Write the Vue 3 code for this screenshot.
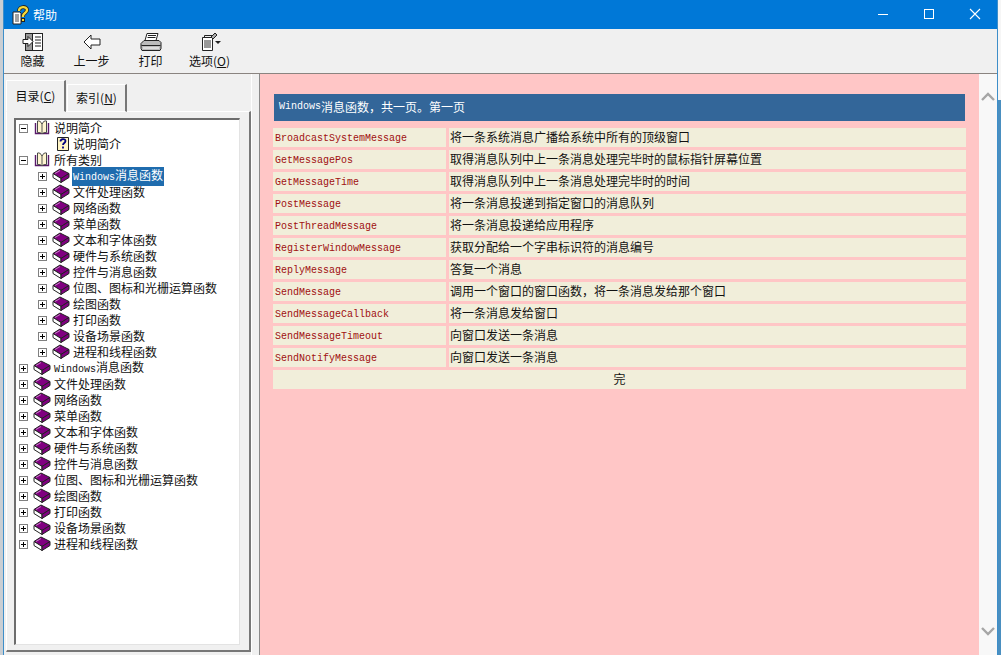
<template>
  <div class="desktop">
    <div class="window">
      <div class="titlebar">
        <svg class="app-icon" width="18" height="20" viewBox="0 0 18 20">
          <path d="M1 7h7l1 1v11H1z" fill="#fff" stroke="#222" />
          <path d="M3 10h4M3 12h4M3 14h4M3 16h4" stroke="#444" />
          <path d="M7 6c0-5 8-5 8-1 0 3-4 3-4 6v1" fill="none" stroke="#222" stroke-width="4" />
          <path d="M7 6c0-5 8-5 8-1 0 3-4 3-4 6v1" fill="none" stroke="#f4d93a" stroke-width="2.400" />
          <rect x="9.500" y="13.500" width="3" height="3" fill="#f4d93a" stroke="#222" />
        </svg>
        <span class="title">帮助</span>
        <div class="caption">
          <svg width="46" height="28" viewBox="0 0 46 28"><path d="M19 13.500h10" stroke="#fff" /></svg>
          <svg width="46" height="28" viewBox="0 0 46 28"><rect x="19.500" y="8.500" width="9" height="9" fill="none" stroke="#fff" /></svg>
          <svg width="46" height="28" viewBox="0 0 46 28"><path d="M19 8l10 10M29 8L19 18" stroke="#fff" stroke-width="1.100" /></svg>
        </div>
      </div>

      <div class="toolbar">
        <div class="tool">
          <svg width="22" height="20" viewBox="0 0 22 20">
            <rect x="3.500" y="1.500" width="17" height="17" fill="#fff" stroke="#222" />
            <rect x="3.500" y="1.500" width="7" height="17" fill="#9a9a9a" stroke="#222" />
            <path d="M13 5h6M13 8h6M13 11h6M13 14h6" stroke="#222" />
            <path d="M1 7.500h5v-3l5 5-5 5v-3H1z" fill="#fff" stroke="#222" />
          </svg>
          <span>隐藏</span>
        </div>
        <div class="tool">
          <svg width="22" height="20" viewBox="0 0 22 20">
            <path d="M3 10l7-7v4h9v6h-9v4z" fill="#fff" stroke="#222" />
          </svg>
          <span>上一步</span>
        </div>
        <div class="tool">
          <svg width="22" height="20" viewBox="0 0 22 20">
            <path d="M7 1.500h11l-2 7H5z" fill="#fff" stroke="#222" />
            <path d="M8 3.500h8M7.500 5.500h8" stroke="#222" />
            <path d="M4 8.500h15l2 2v6l-1 2H2l-1-2v-5z" fill="#bbb" stroke="#222" />
            <path d="M1.500 13.500h19" stroke="#222" />
            <path d="M3 16h16" stroke="#fff" />
          </svg>
          <span>打印</span>
        </div>
        <div class="tool">
          <svg width="22" height="20" viewBox="0 0 22 20">
            <path d="M3.500 5.500h10v13h-10z" fill="#fff" stroke="#222" />
            <path d="M5.500 3.500h10v2M5.500 3.500v2" fill="none" stroke="#222" />
            <path d="M5 9h7M5 11h7M5 13h7M5 15h7" stroke="#333" />
            <path d="M12 5l4-4 2 2-4 4z" fill="#aaa" stroke="#222" />
            <path d="M16 9h6l-3 3z" fill="#222" />
          </svg>
          <span>选项(<u>O</u>)</span>
        </div>
      </div>

      <div class="main">
        <div class="left-pane">
          <div class="tabs">
            <div class="tab active">目录(<u>C</u>)</div>
            <div class="tab">索引(<u>N</u>)</div>
          </div>
          <div class="tab-panel">
            <div class="tree">
              <div v-for="(row, i) in treeRows" :key="i" class="tree-row" :class="'depth-' + row.depth">
                <span class="expander">
                  <svg v-if="row.state" width="9" height="9" viewBox="0 0 9 9">
                    <rect x="0.500" y="0.500" width="8" height="8" fill="#fff" stroke="#808080" />
                    <path d="M2 4.500h5" stroke="#000" />
                    <path v-if="row.state === 'plus'" d="M4.500 2v5" stroke="#000" />
                  </svg>
                </span>
                <span class="node-icon">
                  <svg v-if="row.icon === 'closed'" width="18" height="16" viewBox="0 0 18 16">
                    <path d="M1 5.500L8 1l9 4.500-8 5z" fill="#800080" stroke="#222" />
                    <path d="M1 5.500l8 5v4l-8-5z" fill="#fff" stroke="#222" />
                    <path d="M9 10.500l8-5v4l-8 5z" fill="#800080" stroke="#222" />
                    <path d="M3 5.500L8 2.500" stroke="#c77dc7" />
                  </svg>
                  <svg v-else-if="row.icon === 'open'" width="18" height="16" viewBox="0 0 18 16">
                    <path d="M2.500 3v10.500h13V3" fill="none" stroke="#5a1a6a" stroke-width="1.400" />
                    <path d="M9 4C8 1.500 6 .5 4.500 1v11.500c2 0 3.500 .2 4.500 1.500 1-1.300 2.500-1.500 4.500-1.500V1C12 .5 10 1.500 9 4z" fill="#fff6d0" stroke="#333" stroke-width="0.900" />
                    <path d="M9 4v9.500" stroke="#555" />
                  </svg>
                  <svg v-else width="18" height="16" viewBox="0 0 18 16">
                    <path d="M5.500 1.500h11v13h-11z" fill="#fff5c4" stroke="#222" />
                    <path d="M8.500 5.500c0-3 5-3 5-.500 0 2-2.500 2-2.500 4M11 10.500v2" fill="none" stroke="#000080" stroke-width="1.800" />
                  </svg>
                </span>
                <span class="node-label" :class="{ selected: row.selected }">
                  <span v-if="row.latin" class="latin">{{ row.latin }}</span>{{ row.text }}
                </span>
              </div>
            </div>
          </div>
        </div>

        <div class="splitter"></div>

        <div class="content">
          <div class="page-head"><span class="latin">Windows</span>消息函数，共一页。第一页</div>
          <div class="msg-grid">
            <template v-for="m in messages" :key="m.name">
              <div class="cell name">{{ m.name }}</div>
              <div class="cell desc">{{ m.desc }}</div>
            </template>
            <div class="cell done">完</div>
          </div>
        </div>

        <div class="scrollbar">
          <svg width="18" height="16" viewBox="0 0 18 16"><path d="M3 11l6-6 6 6" fill="none" stroke="#a6a6a6" stroke-width="2.400" /></svg>
          <svg width="18" height="16" viewBox="0 0 18 16"><path d="M3 5l6 6 6-6" fill="none" stroke="#a6a6a6" stroke-width="2.400" /></svg>
        </div>
      </div>
    </div>
  </div>
</template>

<script setup>
const categories = [
  ["Windows", "消息函数"],
  ["", "文件处理函数"],
  ["", "网络函数"],
  ["", "菜单函数"],
  ["", "文本和字体函数"],
  ["", "硬件与系统函数"],
  ["", "控件与消息函数"],
  ["", "位图、图标和光栅运算函数"],
  ["", "绘图函数"],
  ["", "打印函数"],
  ["", "设备场景函数"],
  ["", "进程和线程函数"],
];

const treeRows = [
  { depth: 0, state: "minus", icon: "open", text: "说明简介" },
  { depth: 1, icon: "page", text: "说明简介" },
  { depth: 0, state: "minus", icon: "open", text: "所有类别" },
  ...categories.map(([latin, text], i) => ({
    depth: 1,
    state: "plus",
    icon: "closed",
    latin,
    text,
    selected: i === 0,
  })),
  ...categories.map(([latin, text]) => ({
    depth: 0,
    state: "plus",
    icon: "closed",
    latin,
    text,
  })),
];

const messages = [
  { name: "BroadcastSystemMessage", desc: "将一条系统消息广播给系统中所有的顶级窗口" },
  { name: "GetMessagePos", desc: "取得消息队列中上一条消息处理完毕时的鼠标指针屏幕位置" },
  { name: "GetMessageTime", desc: "取得消息队列中上一条消息处理完毕时的时间" },
  { name: "PostMessage", desc: "将一条消息投递到指定窗口的消息队列" },
  { name: "PostThreadMessage", desc: "将一条消息投递给应用程序" },
  { name: "RegisterWindowMessage", desc: "获取分配给一个字串标识符的消息编号" },
  { name: "ReplyMessage", desc: "答复一个消息" },
  { name: "SendMessage", desc: "调用一个窗口的窗口函数，将一条消息发给那个窗口" },
  { name: "SendMessageCallback", desc: "将一条消息发给窗口" },
  { name: "SendMessageTimeout", desc: "向窗口发送一条消息" },
  { name: "SendNotifyMessage", desc: "向窗口发送一条消息" },
];
</script>

<style>
html,
body {
  margin: 0;
  overflow: hidden;
  background: #c9ced3;
}
</style>

<style scoped>
.desktop {
  height: 655px;
  padding-left: 3px;
  box-sizing: border-box;
  font-family: "Noto Sans CJK SC", "Liberation Sans", sans-serif;
  font-size: 12px;
  color: #111;
  background: linear-gradient(#c9ced3, #c9ced3) left / 3px 100% no-repeat,
    linear-gradient(#f6f6f6 100px, #4a8fc0 100px);
}

.window {
  width: 995px;
  height: 655px;
  box-sizing: border-box;
  display: flex;
  flex-direction: column;
  background: #f0f0f0;
  border-left: 1px solid #3d8ec9;
  border-right: 1px solid #3d8ec9;
}

.titlebar {
  height: 29px;
  flex: none;
  display: flex;
  align-items: center;
  background: #0078d7;
  color: #fff;
  padding-left: 8px;
}

.app-icon {
  margin-right: 3px;
}

.title {
  font-size: 12px;
}

.caption {
  margin-left: auto;
  display: flex;
}

.toolbar {
  height: 45px;
  flex: none;
  display: flex;
  border-bottom: 1px solid #8a8480;
  box-sizing: border-box;
}

.tool {
  width: 59px;
  display: flex;
  flex-direction: column;
  align-items: center;
  padding-top: 3px;
  box-sizing: border-box;
  line-height: 16px;
}

.tool:first-child {
  margin-left: -1px;
}

.tool svg {
  margin-bottom: 1px;
}

.main {
  flex: 1;
  display: flex;
  min-height: 0;
}

.left-pane {
  width: 247px;
  flex: none;
  display: flex;
  flex-direction: column;
  padding: 6px 0 3px 2px;
  box-sizing: border-box;
}

.tabs {
  display: flex;
  align-items: flex-end;
  height: 32px;
  flex: none;
  position: relative;
  z-index: 1;
  margin-bottom: -1px;
}

.tab {
  width: 60px;
  height: 28px;
  box-sizing: border-box;
  border: 1px solid #a0a0a0;
  border-left-color: #fff;
  border-top-color: #fff;
  border-bottom: 1px solid #fff;
  border-right-width: 2px;
  border-right-color: #777;
  display: flex;
  align-items: center;
  justify-content: center;
  padding-bottom: 1px;
  font-size: 12px;
}

.tab.active {
  height: 32px;
  background: #f0f0f0;
  border-bottom-color: #f0f0f0;
  margin-right: 1px;
}

.tab-panel {
  flex: 1;
  min-height: 0;
  box-sizing: border-box;
  border: 1px solid #fff;
  border-right: 2px solid #777;
  border-bottom: 2px solid #777;
  padding: 6px 9px 5px 7px;
  display: flex;
}

.tree {
  flex: 1;
  background: #fff;
  border-top: 2px solid #6d6d6d;
  border-left: 2px solid #6d6d6d;
  border-right: 1px solid #e3e3e3;
  border-bottom: 1px solid #e3e3e3;
  overflow: hidden;
}

.tree-row {
  height: 16px;
  display: flex;
  align-items: center;
  white-space: nowrap;
  padding-left: 3px;
}

.tree-row.depth-1 {
  padding-left: 22px;
}

.expander {
  width: 14px;
  flex: none;
  display: flex;
}

.node-icon {
  width: 20px;
  height: 16px;
  flex: none;
  display: flex;
}

.node-label {
  padding: 0 1px 1px;
  line-height: 15px;
  font-size: 12px;
}

.node-label.selected {
  background: #1f6cae;
  color: #fff;
}

.latin {
  font-family: "Liberation Mono", monospace;
  font-size: 10px;
}

.splitter {
  width: 9px;
  flex: none;
  border-left: 1px solid #fff;
  border-right: 1px solid #8a8a8a;
  box-sizing: border-box;
}

.content {
  width: 719px;
  flex: none;
  background: #ffc6c6;
  padding: 20px 14px 0 13px;
  box-sizing: border-box;
}

.page-head {
  height: 27px;
  margin-left: 1px;
  width: 691px;
  background: #336699;
  color: #fff;
  display: flex;
  align-items: center;
  padding: 0 0 2px 5px;
  box-sizing: border-box;
}

.msg-grid {
  margin-top: 7px;
  display: grid;
  grid-template-columns: 173px 517px;
  column-gap: 3px;
  row-gap: 3px;
  grid-auto-rows: 19px;
}

.cell {
  background: #f1eeda;
  display: flex;
  align-items: center;
  white-space: nowrap;
  box-sizing: border-box;
}

.name {
  padding: 1px 0 0 2px;
  color: #a01010;
  font-family: "Liberation Mono", monospace;
  font-size: 10px;
}

.desc {
  padding: 0 0 2px 1px;
}

.done {
  grid-column: 1 / -1;
  justify-content: center;
  padding-bottom: 2px;
}

.scrollbar {
  flex: 1;
  background: #f8f8f8;
  display: flex;
  flex-direction: column;
  justify-content: space-between;
  padding: 15px 0 16px;
  box-sizing: border-box;
}
</style>
